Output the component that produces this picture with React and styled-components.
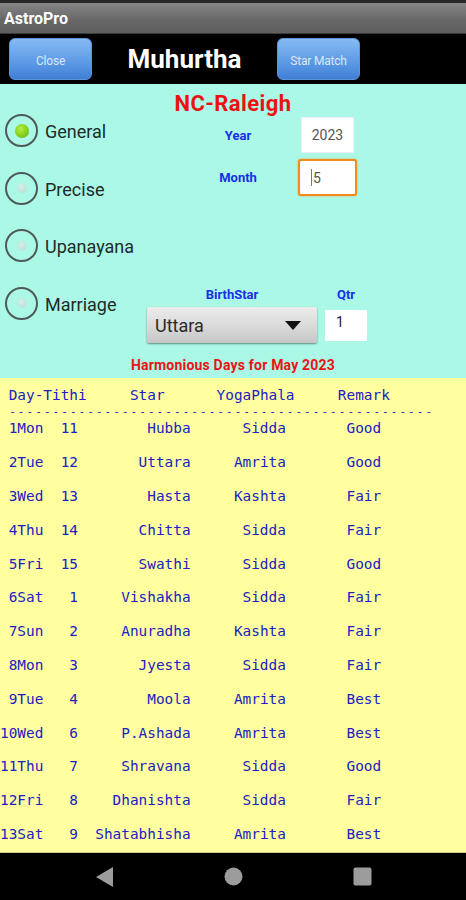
import React from 'react'
import styled, { createGlobalStyle } from 'styled-components'

const GlobalStyle = createGlobalStyle`
    html, body {
        margin: 0;
        padding: 0;
        background: #000;
    }
    body {
        font-family: Roboto, "Noto Sans", sans-serif;
    }
`

const radios = ['General', 'Precise', 'Upanayana', 'Marriage']

const days = [
    ['1Mon', '11', 'Hubba', 'Sidda', 'Good'],
    ['2Tue', '12', 'Uttara', 'Amrita', 'Good'],
    ['3Wed', '13', 'Hasta', 'Kashta', 'Fair'],
    ['4Thu', '14', 'Chitta', 'Sidda', 'Fair'],
    ['5Fri', '15', 'Swathi', 'Sidda', 'Good'],
    ['6Sat', '1', 'Vishakha', 'Sidda', 'Fair'],
    ['7Sun', '2', 'Anuradha', 'Kashta', 'Fair'],
    ['8Mon', '3', 'Jyesta', 'Sidda', 'Fair'],
    ['9Tue', '4', 'Moola', 'Amrita', 'Best'],
    ['10Wed', '6', 'P.Ashada', 'Amrita', 'Best'],
    ['11Thu', '7', 'Shravana', 'Sidda', 'Good'],
    ['12Fri', '8', 'Dhanishta', 'Sidda', 'Fair'],
    ['13Sat', '9', 'Shatabhisha', 'Amrita', 'Best'],
]

const App = () => {
    return (
        <Screen>
            <GlobalStyle />
            <StatusStrip />
            <TitleBar>AstroPro</TitleBar>
            <Toolbar>
                <BlueButton>Close</BlueButton>
                <ScreenTitle>Muhurtha</ScreenTitle>
                <BlueButton>Star Match</BlueButton>
            </Toolbar>

            <FormPanel>
                <Place>NC-Raleigh</Place>
                <FormBody>
                    <RadioList>
                        {radios.map((r, i) => (
                            <RadioRow key={r}>
                                <RadioCircle $checked={i === 0} />
                                <RadioLabel>{r}</RadioLabel>
                            </RadioRow>
                        ))}
                    </RadioList>
                    <Fields>
                        <FieldRow $top={3}>
                            <FieldLabel>Year</FieldLabel>
                            <InputBox>2023</InputBox>
                        </FieldRow>
                        <FieldRow $top={6}>
                            <FieldLabel>Month</FieldLabel>
                            <InputBox $focused>
                                <Caret />5
                            </InputBox>
                        </FieldRow>
                        <StarGrid>
                            <FieldLabel>BirthStar</FieldLabel>
                            <FieldLabel>Qtr</FieldLabel>
                            <Spinner>
                                <span>Uttara</span>
                                <svg width="16" height="9" viewBox="0 0 16 9">
                                    <path d="M0 0 H16 L8 9 Z" fill="#111" />
                                </svg>
                            </Spinner>
                            <QtrBox>1</QtrBox>
                        </StarGrid>
                    </Fields>
                </FormBody>
                <Caption>Harmonious Days for May 2023</Caption>
            </FormPanel>

            <ResultPanel>
                <HeaderRow>
                    <span />
                    <span>Day-Tithi</span>
                    <span>Star</span>
                    <span>YogaPhala</span>
                    <span>Remark</span>
                </HeaderRow>
                <DashLine>{'-'.repeat(49)}</DashLine>
                {days.map(d => (
                    <DayRow key={d[0]}>
                        {d.map((cell, i) => (
                            <span key={i}>{cell}</span>
                        ))}
                    </DayRow>
                ))}
            </ResultPanel>

            <NavBar>
                <svg width="19" height="22" viewBox="0 0 19 22">
                    <path d="M18 1 V21 L1 11 Z" fill="#9c9c9c" />
                </svg>
                <svg width="19" height="19" viewBox="0 0 19 19">
                    <circle cx="9.5" cy="9.5" r="9" fill="#9c9c9c" />
                </svg>
                <svg width="19" height="19" viewBox="0 0 19 19">
                    <rect x="0.5" y="0.5" width="18" height="18" rx="2" fill="#9c9c9c" />
                </svg>
            </NavBar>
        </Screen>
    )
}

const Screen = styled.div`
    width: 466px;
    height: 900px;
    display: flex;
    flex-direction: column;
    overflow: hidden;
    background: #000;
`

const StatusStrip = styled.div`
    height: 3px;
    background: #262626;
`

const TitleBar = styled.div`
    height: 30px;
    display: flex;
    align-items: center;
    padding-left: 4px;
    background: linear-gradient(#858585, #666 60%, #5f5f5f);
    border-bottom: 1px solid #3a3a3a;
    color: #fff;
    font-size: 16px;
    font-weight: 700;
`

const Toolbar = styled.div`
    height: 50px;
    display: flex;
    align-items: center;
    padding-left: 9px;
    background: #000;
`

const BlueButton = styled.div`
    width: 83px;
    height: 42px;
    box-sizing: border-box;
    display: flex;
    align-items: center;
    justify-content: center;
    padding-top: 3px;
    border-radius: 6px;
    border: 1px solid #5d95dc;
    background: linear-gradient(#86bbf3, #5f9be6 55%, #3f7fd6);
    color: #d9e7f8;
    font-size: 12px;
    letter-spacing: -0.2px;
`

const ScreenTitle = styled.div`
    width: 185px;
    text-align: center;
    color: #fff;
    font-size: 26px;
    font-weight: 700;
`

const FormPanel = styled.div`
    height: 294px;
    display: flex;
    flex-direction: column;
    background: #abf8e6;
`

const Place = styled.div`
    height: 30px;
    display: flex;
    align-items: center;
    justify-content: center;
    padding-top: 9px;
    box-sizing: border-box;
    color: #ee1111;
    font-size: 22px;
    font-weight: 700;
    letter-spacing: 0.4px;
`

const FormBody = styled.div`
    display: flex;
`

const RadioList = styled.div`
    width: 142px;
    padding-left: 5px;
    display: flex;
    flex-direction: column;
    gap: 24.5px;
`

const RadioRow = styled.div`
    height: 33px;
    display: flex;
    align-items: center;
    gap: 7px;
`

const RadioCircle = styled.div`
    width: 33px;
    height: 33px;
    box-sizing: border-box;
    border-radius: 50%;
    border: 2px solid #4f5a58;
    display: flex;
    align-items: center;
    justify-content: center;
    &::after {
        content: '';
        width: ${p => (p.$checked ? 14 : 10)}px;
        height: ${p => (p.$checked ? 14 : 10)}px;
        border-radius: 50%;
        background: ${p =>
            p.$checked
                ? 'radial-gradient(circle at 40% 35%, #b6ee4a, #7fcc18 60%, #5ea510)'
                : 'radial-gradient(circle at 40% 35%, #d2efe8, #b6dcd3)'};
    }
`

const RadioLabel = styled.div`
    color: #1d2b2b;
    font-size: 18px;
    margin-top: 2px;
`

const Fields = styled.div`
    display: flex;
    flex-direction: column;
`

const FieldRow = styled.div`
    display: flex;
    align-items: center;
    margin-top: ${p => p.$top}px;
    padding-left: 31px;
`

const FieldLabel = styled.div`
    width: 120px;
    text-align: center;
    color: #1a2ee6;
    font-size: 13px;
    font-weight: 700;
    line-height: 15px;
`

const InputBox = styled.div`
    box-sizing: border-box;
    width: ${p => (p.$focused ? 59 : 53)}px;
    height: ${p => (p.$focused ? 37 : 36)}px;
    margin-left: ${p => (p.$focused ? 0 : 3)}px;
    display: flex;
    align-items: center;
    justify-content: ${p => (p.$focused ? 'flex-start' : 'center')};
    padding-left: ${p => (p.$focused ? 11 : 0)}px;
    background: #fff;
    border: ${p => (p.$focused ? '2px solid #f08b1d' : '1px solid #eef')};
    border-radius: ${p => (p.$focused ? 3 : 1)}px;
    box-shadow: ${p => (p.$focused ? '0 0 2px #f5a04a' : 'none')};
    color: #555;
    font-size: 14px;
`

const Caret = styled.span`
    width: 1px;
    height: 17px;
    margin-right: 1px;
    background: #777;
`

const StarGrid = styled.div`
    display: grid;
    grid-template-columns: 170px 42px;
    column-gap: 8px;
    row-gap: 5.5px;
    align-items: center;
    margin-top: 90.5px;
    ${FieldLabel} {
        width: auto;
    }
`

const Spinner = styled.div`
    height: 36px;
    box-sizing: border-box;
    display: flex;
    align-items: center;
    justify-content: space-between;
    padding: 0 16px 0 8px;
    border-radius: 2px;
    background: linear-gradient(#ececec, #d9d9d9 55%, #c6c6c6);
    box-shadow: 0 1px 2px rgba(0, 0, 0, 0.45);
    color: #2a2a2a;
    font-size: 18px;
`

const QtrBox = styled.div`
    height: 31px;
    box-sizing: border-box;
    padding: 4px 0 0 11px;
    background: #fff;
    color: #222;
    font-size: 14px;
`

const Caption = styled.div`
    margin-top: auto;
    padding-bottom: 5px;
    text-align: center;
    color: #e81414;
    font-size: 14px;
    font-weight: 700;
    line-height: 16px;
    letter-spacing: 0.2px;
`

const ResultPanel = styled.div`
    height: 475px;
    box-sizing: border-box;
    padding-top: 8.6px;
    background: #ffffa0;
    border-bottom: 1px solid #c9c98a;
    color: #2020c4;
    font-family: "DejaVu Sans Mono", "Liberation Mono", monospace;
    font-size: 14.4px;
    line-height: 16.9px;
    white-space: pre;
`

const HeaderRow = styled.div`
    display: grid;
    grid-template-columns: 1ch 14ch 10ch 14ch auto;
`

const DashLine = styled.div`
    height: 16.9px;
    padding-left: 9.2px;
    font-size: 11px;
    letter-spacing: 2.05px;
`

const DayRow = styled.div`
    display: grid;
    grid-template-columns: 5ch 4ch 13ch 11ch 11ch;
    height: 33.8px;
    text-align: right;
`

const NavBar = styled.div`
    flex: 1;
    display: flex;
    align-items: center;
    justify-content: space-between;
    padding: 0 94px 0 95px;
    background: #000;
`

export default App
